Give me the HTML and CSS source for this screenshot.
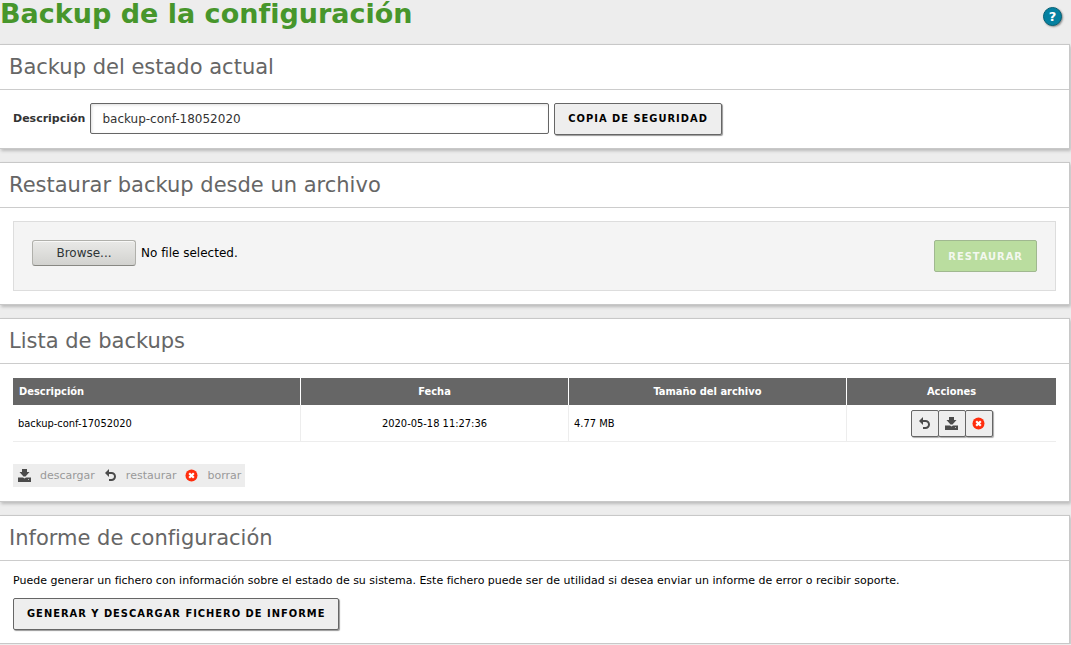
FILE: index.html
```html
<!DOCTYPE html>
<html lang="es">
<head>
<meta charset="utf-8">
<title>Backup de la configuración</title>
<link rel="stylesheet" href="styles.css">
</head>
<body>
<svg class="symbols" aria-hidden="true">
  <symbol id="download" viewBox="0 0 13 13"><path d="M4 0h5v3h2.500L7.500 7.500h-2L1.500 3H4z"/><path d="M0 8.500h5l1.500 1 1.500-1h5V13H0z"/><path d="M10 10h1v1h-1z" fill="#bbb"/></symbol>
  <symbol id="undo" viewBox="0 0 13 13"><path d="M3 4h4.500a3.500 3.500 0 0 1 0 7H5" fill="none" stroke="currentColor" stroke-width="2"/><path d="M5 0v8L1 4z"/></symbol>
  <symbol id="delete" viewBox="0 0 13 13"><circle cx="6.500" cy="6.500" r="6" fill="#ff2d0d"/><path d="M4.200 4.200l4.600 4.600m0-4.600L4.200 8.800" stroke="#fff" stroke-width="2.200"/></symbol>
</svg>
<header class="page-header">
  <h1 class="page-title">Backup de la configuración</h1>
  <button class="help" type="button" aria-label="Ayuda">?</button>
</header>
<main class="panels">
  <section class="panel">
    <h2 class="panel-title">Backup del estado actual</h2>
    <form class="panel-body backup-form">
      <label class="field-label" for="description">Descripción</label>
      <input class="text-field" id="description" type="text" value="backup-conf-18052020">
      <button class="button" type="button">COPIA DE SEGURIDAD</button>
    </form>
  </section>
  <section class="panel">
    <h2 class="panel-title">Restaurar backup desde un archivo</h2>
    <div class="panel-body">
      <form class="restore-box">
        <div class="file-picker">
          <input class="file-input" id="file" type="file">
          <label class="browse" for="file">Browse...</label>
          <span>No file selected.</span>
        </div>
        <button class="button button-green" type="button" disabled>RESTAURAR</button>
      </form>
    </div>
  </section>
  <section class="panel">
    <h2 class="panel-title">Lista de backups</h2>
    <div class="panel-body list-body">
      <table class="backups">
        <colgroup><col class="col-name"><col class="col-date"><col class="col-size"><col class="col-actions"></colgroup>
        <thead><tr><th class="left">Descripción</th><th>Fecha</th><th>Tamaño del archivo</th><th>Acciones</th></tr></thead>
        <tbody><tr>
          <td>backup-conf-17052020</td>
          <td class="center">2020-05-18 11:27:36</td>
          <td>4.77 MB</td>
          <td><div class="actions">
            <button class="action" type="button" aria-label="restaurar"><svg class="icon"><use href="#undo"/></svg></button>
            <button class="action" type="button" aria-label="descargar"><svg class="icon"><use href="#download"/></svg></button>
            <button class="action" type="button" aria-label="borrar"><svg class="icon"><use href="#delete"/></svg></button>
          </div></td>
        </tr></tbody>
      </table>
      <ul class="legend">
        <li class="legend-item"><svg class="icon"><use href="#download"/></svg>descargar</li>
        <li class="legend-item"><svg class="icon"><use href="#undo"/></svg>restaurar</li>
        <li class="legend-item"><svg class="icon"><use href="#delete"/></svg>borrar</li>
      </ul>
    </div>
  </section>
  <section class="panel">
    <h2 class="panel-title">Informe de configuración</h2>
    <div class="panel-body report-body">
      <p class="report-text">Puede generar un fichero con información sobre el estado de su sistema. Este fichero puede ser de utilidad si desea enviar un informe de error o recibir soporte.</p>
      <button class="button" type="button">GENERAR Y DESCARGAR FICHERO DE INFORME</button>
    </div>
  </section>
</main>
</body>
</html>
```
FILE: styles.css
```css
* { box-sizing: border-box; }
body {
  margin: 0;
  background: #ededed;
  color: #000;
  font-family: "DejaVu Sans", sans-serif;
  font-size: 11px;
}
button, input { font-family: inherit; }
.symbols { display: none; }

.page-header {
  display: flex;
  justify-content: space-between;
  height: 44px;
  padding-right: 9px;
}
.page-title {
  margin: 0;
  color: #47962b;
  font-size: 27px;
  line-height: 28px;
}
.help {
  width: 19px;
  height: 19px;
  margin-top: 7px;
  padding: 0;
  border: 1px solid #066277;
  border-radius: 50%;
  background: #0581a1;
  box-shadow: 1px 1px 2px #888;
  color: #fff;
  font-size: 13px;
  font-weight: bold;
  line-height: 16px;
}

.panels { display: grid; gap: 13px; padding-right: 1px; }
.panel {
  border: solid #c8c8c8;
  border-width: 1px 1px 1px 0;
  background: #fff;
  box-shadow: 1px 2px 3px #bbb;
}
.panel-title {
  margin: 0;
  padding: 0 9px;
  border-bottom: 1px solid #ccc;
  color: #666;
  font-size: 21px;
  font-weight: normal;
  line-height: 44px;
}
.panel-body { padding: 13px; }

.backup-form { display: flex; gap: 5px; }
.field-label { color: #333; font-weight: bold; line-height: 31px; }
.text-field {
  width: 44%;
  height: 31px;
  padding: 0 11px;
  border: 1px solid #666;
  border-radius: 2px;
  background: #fff;
  box-shadow: inset 1px 1px 3px #ddd;
  color: #333;
  font-size: 12px;
}
.button {
  height: 32px;
  padding: 0 13px 2px;
  border: 1px solid #666;
  border-radius: 2px;
  background: #eee;
  box-shadow: 1px 1px 1px #999;
  color: #000;
  font-family: "DejaVu Sans Condensed", "DejaVu Sans", sans-serif;
  font-size: 11px;
  font-weight: bold;
  letter-spacing: 1px;
}
.button-green {
  padding-bottom: 0;
  border-color: #a0b890;
  background: #badd9f;
  box-shadow: none;
  color: #f4f8f0;
}

.restore-box {
  display: flex;
  justify-content: space-between;
  padding: 18px;
  border: 1px solid #ddd;
  background: #f4f4f4;
}
.file-picker { display: flex; align-items: center; gap: 5px; height: 26px; margin-bottom: 6px; font-size: 12px; }
.file-input { position: absolute; width: 1px; height: 1px; opacity: 0; }
.browse {
  width: 104px;
  border: 1px solid #b0b0ab;
  border-bottom-color: #888883;
  border-radius: 3px;
  background: linear-gradient(#e9e9e7, #d2d2cf);
  box-shadow: inset 0 1px #f8f8f7;
  color: #2e3436;
  line-height: 24px;
  text-align: center;
}

.list-body { padding: 14px 13px; }
.backups {
  width: 100%;
  border-collapse: separate;
  border-spacing: 0;
  table-layout: fixed;
  font-family: "DejaVu Sans Condensed", "DejaVu Sans", sans-serif;
  font-size: 11px;
}
.col-name { width: 288px; }
.col-date { width: 268px; }
.col-size { width: 278px; }
.backups th {
  height: 27px;
  padding: 0 6px;
  border-right: 1px solid #fff;
  background: #666;
  color: #fff;
}
.backups td {
  height: 37px;
  padding: 0 5px;
  border-right: 1px solid #ededed;
  border-bottom: 1px solid #ededed;
}
.backups th:last-child, .backups td:last-child { border-right: 0; }
.backups .left { text-align: left; }
.backups .center { text-align: center; }
.actions { display: flex; justify-content: center; }
.action {
  display: grid;
  place-items: center;
  width: 28px;
  height: 27px;
  padding: 0;
  border: 1px solid #666;
  border-radius: 2px;
  background: #eee;
  box-shadow: 1px 1px 1px #aaa;
}
.action + .action { margin-left: -1px; }
.icon { width: 13px; height: 13px; color: #4b4b4b; fill: currentColor; }

.legend {
  display: flex;
  gap: 9px;
  width: fit-content;
  margin: 22px 0 0;
  padding: 0 4px 0 5px;
  background: #ededed;
  color: #999;
  line-height: 23px;
  list-style: none;
}
.legend-item { display: flex; align-items: center; gap: 9px; }

.report-body { padding-top: 12px; }
.report-text { margin: 0 0 10px; line-height: 15px; }
```
